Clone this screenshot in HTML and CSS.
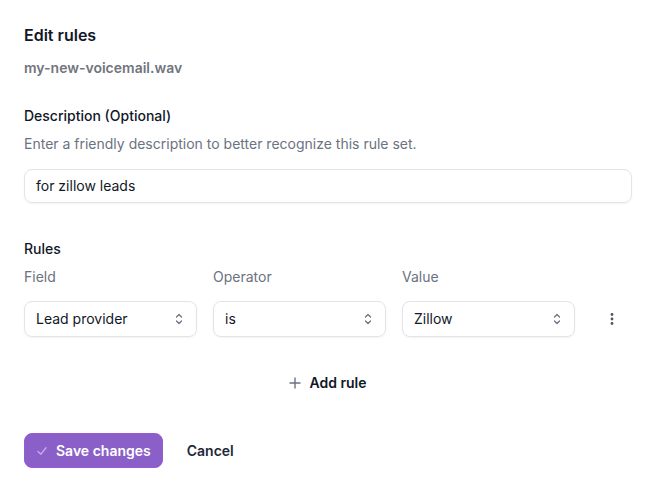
FILE: index.html
```html
<!DOCTYPE html>
<html lang="en">
<head>
<meta charset="utf-8">
<title>Edit rules</title>
<link rel="stylesheet" href="styles.css">
</head>
<body>
<main class="panel">
  <h1 class="title">Edit rules</h1>
  <p class="subtitle">my-new-voicemail.wav</p>

  <section class="desc">
    <label class="label">Description (Optional)</label>
    <p class="help">Enter a friendly description to better recognize this rule set.</p>
    <div class="input">for zillow leads</div>
  </section>

  <section class="rules">
    <h2 class="label">Rules</h2>
    <div class="grid">
      <span class="col-label">Field</span>
      <span class="col-label">Operator</span>
      <span class="col-label">Value</span>
      <span></span>

      <div class="select"><span>Lead provider</span><svg class="chev" width="10" height="14" viewBox="0 0 10 14"><path d="M2.5 5 5 2.5 7.5 5M2.5 9 5 11.5 7.5 9" fill="none" stroke="#6b7280" stroke-width="1.3" stroke-linecap="round" stroke-linejoin="round"/></svg></div>
      <div class="select"><span>is</span><svg class="chev" width="10" height="14" viewBox="0 0 10 14"><path d="M2.5 5 5 2.5 7.5 5M2.5 9 5 11.5 7.5 9" fill="none" stroke="#6b7280" stroke-width="1.3" stroke-linecap="round" stroke-linejoin="round"/></svg></div>
      <div class="select"><span>Zillow</span><svg class="chev" width="10" height="14" viewBox="0 0 10 14"><path d="M2.5 5 5 2.5 7.5 5M2.5 9 5 11.5 7.5 9" fill="none" stroke="#6b7280" stroke-width="1.3" stroke-linecap="round" stroke-linejoin="round"/></svg></div>
      <div class="more"><svg width="4" height="14" viewBox="0 0 4 14"><circle cx="2" cy="2.5" r="1.4" fill="#4b5563"/><circle cx="2" cy="7" r="1.4" fill="#4b5563"/><circle cx="2" cy="11.5" r="1.4" fill="#4b5563"/></svg></div>
    </div>
    <div class="add-row">
      <button class="add"><svg width="12" height="12" viewBox="0 0 12 12"><path d="M6 1v10M1 6h10" stroke="#6b7280" stroke-width="1.4" stroke-linecap="round"/></svg><span>Add rule</span></button>
    </div>
  </section>

  <div class="actions">
    <button class="save"><svg width="12" height="12" viewBox="0 0 12 12"><path d="M2 6.5 4.8 9.2 10 2.8" fill="none" stroke="#c4a8ec" stroke-width="1.4" stroke-linecap="round" stroke-linejoin="round"/></svg><span>Save changes</span></button>
    <button class="cancel">Cancel</button>
  </div>
</main>
</body>
</html>
```

FILE: styles.css
```css
* { box-sizing: border-box; }
html, body { margin: 0; background: #ffffff; }
body {
  font-family: Inter, "Noto Sans", "Liberation Sans", sans-serif;
  color: #111827;
  font-size: 14px;
  line-height: 20px;
}
.panel {
  padding: 23px 22px 0 24px;
  display: flex;
  flex-direction: column;
}
.title {
  margin: 0;
  font-size: 16px;
  line-height: 24px;
  font-weight: 600;
}
.subtitle {
  margin: 11px 0 0;
  font-weight: 600;
  color: #71757e;
}
.desc { margin-top: 28px; display: flex; flex-direction: column; }
.label {
  margin: 0;
  font-size: 14px;
  line-height: 20px;
  font-weight: 500;
  color: #111827;
}
.help { margin: 8px 0 0; color: #6b7280; }
.input {
  margin-top: 15px;
  height: 34px;
  border: 1px solid #e2e4e8;
  border-radius: 8px;
  padding: 0 11px;
  display: flex;
  align-items: center;
  box-shadow: 0 1px 2px rgba(16, 24, 40, 0.05);
}
.rules { margin-top: 36px; }
.grid {
  margin-top: 8px;
  display: grid;
  grid-template-columns: 173px 173px 173px 1fr;
  column-gap: 16px;
  row-gap: 14px;
}
.col-label { color: #6b7280; }
.select {
  height: 36px;
  border: 1px solid #e2e4e8;
  border-radius: 8px;
  padding: 0 12px 0 11px;
  display: flex;
  align-items: center;
  justify-content: space-between;
  box-shadow: 0 1px 2px rgba(16, 24, 40, 0.05);
}
.more { display: flex; align-items: center; justify-content: center; }
.add-row { margin-top: 28px; display: flex; justify-content: center; }
button { font-family: inherit; font-size: 14px; line-height: 20px; cursor: pointer; white-space: nowrap; }
.add {
  height: 36px;
  border: 0;
  background: transparent;
  color: #111827;
  font-weight: 600;
  display: flex;
  align-items: center;
  gap: 8px;
  padding: 0 8px;
}
.actions {
  margin-top: 32px;
  display: flex;
  align-items: center;
  gap: 24px;
}
.save {
  height: 35px;
  border: 1px solid #9a5ad8;
  border-radius: 8px;
  background: #8a60c8;
  color: #ffffff;
  font-weight: 600;
  display: flex;
  align-items: center;
  gap: 8px;
  padding: 0 11px 0 11px;
}
.cancel {
  border: 0;
  background: transparent;
  padding: 0;
  font-weight: 600;
  color: #1f2937;
}
```
